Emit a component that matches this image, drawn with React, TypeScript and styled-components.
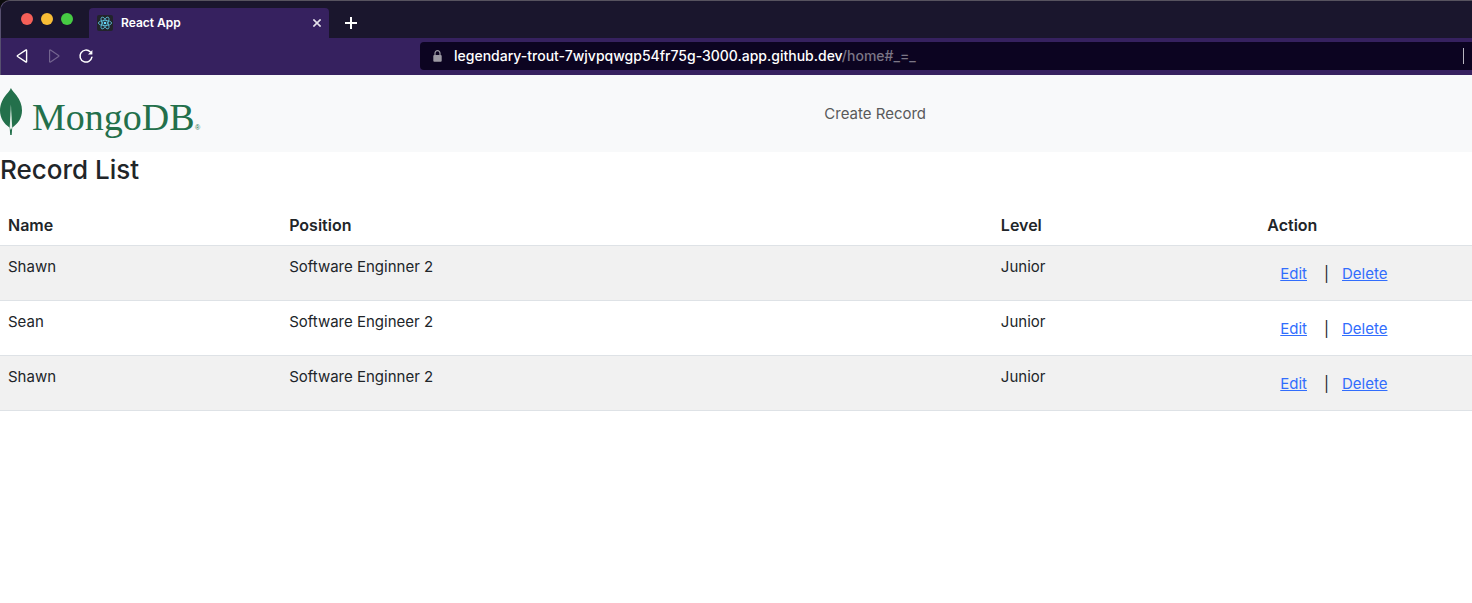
import React from "react";
import styled, { createGlobalStyle } from "styled-components";

const GlobalStyle = createGlobalStyle`
  *, *::before, *::after { box-sizing: border-box; }
  body {
    margin: 0;
    background: #fff;
    color: #212529;
    font: 400 15px/24px Inter, "Liberation Sans", sans-serif;
  }
`;

const Chrome = styled.header`
  background: #36215f;
  border-top: 1px solid #57535f;
  border-left: 1px solid #57506f;
  border-top-left-radius: 10px;
  overflow: hidden;
`;

const Backdrop = styled.div`
  background: #0b0b0d;
`;

const TabStrip = styled.div`
  display: flex;
  align-items: flex-end;
  height: 37px;
  padding-left: 20px;
  background: #1a162d;
`;

const WindowControls = styled.div`
  display: flex;
  gap: 8px;
  width: 68px;
  padding-bottom: 13px;
`;

const Light = styled.button<{ $color: string }>`
  width: 12px;
  height: 12px;
  padding: 0;
  border: 0;
  border-radius: 50%;
  background: ${(p) => p.$color};
`;

const Tab = styled.div`
  display: flex;
  align-items: center;
  width: 240px;
  height: 30px;
  padding: 0 6px 0 8px;
  border-radius: 4px 4px 0 0;
  background: #36215f;
  color: #fff;
  font-size: 12px;
  font-weight: 600;
  line-height: 16px;
`;

const TabTitle = styled.span`
  flex: 1;
  margin-left: 8px;
`;

const IconButton = styled.button<{ $size: number; $color?: string }>`
  display: flex;
  align-items: center;
  justify-content: center;
  width: ${(p) => p.$size}px;
  height: ${(p) => p.$size}px;
  padding: 0;
  border: 0;
  background: none;
  color: ${(p) => p.$color || "#fff"};
`;

const NewTab = styled.div`
  display: flex;
  align-items: center;
  height: 30px;
  padding-left: 14px;
`;

const Toolbar = styled.div`
  display: flex;
  align-items: center;
  height: 37px;
  padding-bottom: 1px;
`;

const NavButtons = styled.div`
  display: flex;
  gap: 16px;
  flex: 0 0 419px;
  padding-left: 13px;
`;

const AddressBar = styled.div`
  display: flex;
  flex: 1;
  align-items: center;
  min-width: 0;
  height: 28px;
  padding: 0 8px 0 13px;
  border-radius: 4px 0 0 4px;
  background: #0c0421;
`;

const Address = styled.div`
  flex: 1;
  margin-left: 12px;
  color: #fff;
  font-size: 14px;
  font-weight: 500;
  line-height: 20px;
  white-space: nowrap;
`;

const AddressPath = styled.span`
  color: #7b7686;
`;

const BarDivider = styled.span`
  width: 1px;
  height: 16px;
  background: #b9b6c0;
`;

const Navbar = styled.nav`
  display: grid;
  grid-template-columns: 56% 1fr;
  align-items: center;
  height: 77px;
  background: #f8f9fa;
`;

const Brand = styled.a`
  display: flex;
  width: 204px;
  color: #23704b;
`;

const NavLink = styled.a`
  justify-self: start;
  color: #595a5b;
  text-decoration: none;
`;

const Title = styled.h3`
  margin: 0 0 17px;
  font-size: 26px;
  font-weight: 500;
  line-height: 36px;
`;

const Records = styled.table`
  width: 100%;
  border-collapse: collapse;
  table-layout: fixed;
`;

const HeadCell = styled.th<{ $width?: string }>`
  width: ${(p) => p.$width || "auto"};
  padding: 8px;
  border-bottom: 1px solid #dee2e6;
  font-size: 16px;
  font-weight: 600;
  text-align: left;
`;

const Row = styled.tr`
  &:nth-child(odd) { background: #f1f1f1; }
`;

const Cell = styled.td`
  height: 55px;
  padding: 9px 8px 7px;
  border-bottom: 1px solid #dee2e6;
  vertical-align: top;
`;

const Actions = styled.div`
  display: flex;
  align-items: center;
  height: 38px;
`;

const ActionLink = styled.a`
  padding: 0 17px 0 13px;
  color: #316dfd;
  text-decoration: underline;
`;

const ActionButton = styled.button`
  padding: 0 13px;
  border: 0;
  background: none;
  color: #316dfd;
  font: inherit;
  text-decoration: underline;
`;

const ReactIcon = () => (
  <svg width="16" height="16" viewBox="0 0 16 16" aria-hidden="true">
    <rect width="16" height="16" rx="2" fill="#22242b" />
    <g fill="none" stroke="#5fc5de" strokeWidth="0.8">
      <ellipse cx="8" cy="8" rx="6.6" ry="2.6" />
      <ellipse cx="8" cy="8" rx="6.6" ry="2.6" transform="rotate(60 8 8)" />
      <ellipse cx="8" cy="8" rx="6.6" ry="2.6" transform="rotate(120 8 8)" />
    </g>
    <circle cx="8" cy="8" r="1.3" fill="#61dafb" />
  </svg>
);

const CloseIcon = () => (
  <svg width="8" height="8" viewBox="0 0 8 8" aria-hidden="true">
    <path d="M.4.4l7.2 7.2M7.6.4L.4 7.6" stroke="currentColor" strokeWidth="1.6" />
  </svg>
);

const PlusIcon = () => (
  <svg width="12" height="12" viewBox="0 0 12 12" aria-hidden="true">
    <path d="M6 0v12M0 6h12" stroke="currentColor" strokeWidth="2" />
  </svg>
);

const BackIcon = () => (
  <svg width="16" height="16" viewBox="0 0 16 16" aria-hidden="true">
    <path d="M12.6 2.6v10.8q0 1.1-.9.5L3.6 8.5q-.7-.5 0-1L11.7 2.1q.9-.6.9.5z" fill="none" stroke="currentColor" strokeWidth="1.4" strokeLinejoin="round" />
  </svg>
);

const ForwardIcon = () => (
  <svg width="16" height="16" viewBox="0 0 16 16" aria-hidden="true">
    <path d="M3.6 2.6v10.8q0 1.1.9.5L12.6 8.5q.7-.5 0-1L4.5 2.1q-.9-.6-.9.5z" fill="none" stroke="currentColor" strokeWidth="1.2" strokeLinejoin="round" />
  </svg>
);

const ReloadIcon = () => (
  <svg width="16" height="16" viewBox="0 0 16 16" aria-hidden="true">
    <path d="M13.9 9.2A6 6 0 1 1 12.2 3.8" fill="none" stroke="currentColor" strokeWidth="1.5" strokeLinecap="round" />
    <path d="M14.4 2v3.9q0 .5-.5.5H10z" fill="currentColor" />
  </svg>
);

const LockIcon = () => (
  <svg width="9" height="12" viewBox="0 0 9 12" aria-hidden="true">
    <path d="M2 6V3.2a2.5 2.5 0 0 1 5 0V6" fill="none" stroke="#9c99a3" strokeWidth="1.2" />
    <rect x="0.3" y="5" width="8.4" height="6.7" rx="1" fill="#9c99a3" />
  </svg>
);

const MongoLogo = () => (
  <svg width="204" height="56" viewBox="0 0 204 56" role="img" aria-label="MongoDB">
    <path d="M10.9 2C12 4.6 14.2 6.5 16.4 9.3C20.2 14.2 22 19.3 22 24.6C22 32.2 18 37.7 12.2 41.7L11.7 49H10.2L9.7 41.7C4 38 0 32 0 24.6C0 18.3 2.7 12.6 6.5 8.3C8.8 5.7 10.1 4.3 10.9 2Z" fill="#23704b" />
    <path d="M10.9 18.5L12.2 41.5L10.9 44L9.7 41.5Z" fill="#e4efe9" />
    <text x="32" y="44" fill="#23704b" fontFamily="'Liberation Serif', serif" fontSize="38">MongoDB</text>
    <text x="195" y="44" fill="#23704b" fontFamily="'Liberation Sans', sans-serif" fontSize="7">®</text>
  </svg>
);

const records = [
  { id: 1, name: "Shawn", position: "Software Enginner 2", level: "Junior" },
  { id: 2, name: "Sean", position: "Software Engineer 2", level: "Junior" },
  { id: 3, name: "Shawn", position: "Software Enginner 2", level: "Junior" },
];

export default function App() {
  return (
    <>
      <GlobalStyle />
      <Backdrop>
        <Chrome>
          <TabStrip>
            <WindowControls>
              <Light $color="#f55f58" aria-label="Close window" />
              <Light $color="#f9bd36" aria-label="Minimize window" />
              <Light $color="#46cb43" aria-label="Zoom window" />
            </WindowControls>
            <Tab>
              <ReactIcon />
              <TabTitle>React App</TabTitle>
              <IconButton $size={12} $color="#e4e1ea" aria-label="Close tab"><CloseIcon /></IconButton>
            </Tab>
            <NewTab>
              <IconButton $size={16} aria-label="New tab"><PlusIcon /></IconButton>
            </NewTab>
          </TabStrip>
          <Toolbar>
            <NavButtons>
              <IconButton $size={16} aria-label="Back"><BackIcon /></IconButton>
              <IconButton $size={16} $color="#73648f" aria-label="Forward"><ForwardIcon /></IconButton>
              <IconButton $size={16} aria-label="Reload"><ReloadIcon /></IconButton>
            </NavButtons>
            <AddressBar>
              <LockIcon />
              <Address role="textbox" aria-label="Address" contentEditable suppressContentEditableWarning spellCheck={false}>
                legendary-trout-7wjvpqwgp54fr75g-3000.app.github.dev<AddressPath>/home#_=_</AddressPath>
              </Address>
              <BarDivider />
            </AddressBar>
          </Toolbar>
        </Chrome>
      </Backdrop>
      <Navbar>
        <Brand href="#home"><MongoLogo /></Brand>
        <NavLink href="#create">Create Record</NavLink>
      </Navbar>
      <main>
        <Title>Record List</Title>
        <Records>
          <thead>
            <tr>
              <HeadCell $width="19.1%">Name</HeadCell>
              <HeadCell $width="48.35%">Position</HeadCell>
              <HeadCell $width="18.1%">Level</HeadCell>
              <HeadCell>Action</HeadCell>
            </tr>
          </thead>
          <tbody>
            {records.map((r) => (
              <Row key={r.id}>
                <Cell>{r.name}</Cell>
                <Cell>{r.position}</Cell>
                <Cell>{r.level}</Cell>
                <Cell>
                  <Actions>
                    <ActionLink href={`#edit/${r.id}`}>Edit</ActionLink>
                    <span>|</span>
                    <ActionButton type="button">Delete</ActionButton>
                  </Actions>
                </Cell>
              </Row>
            ))}
          </tbody>
        </Records>
      </main>
    </>
  );
}
